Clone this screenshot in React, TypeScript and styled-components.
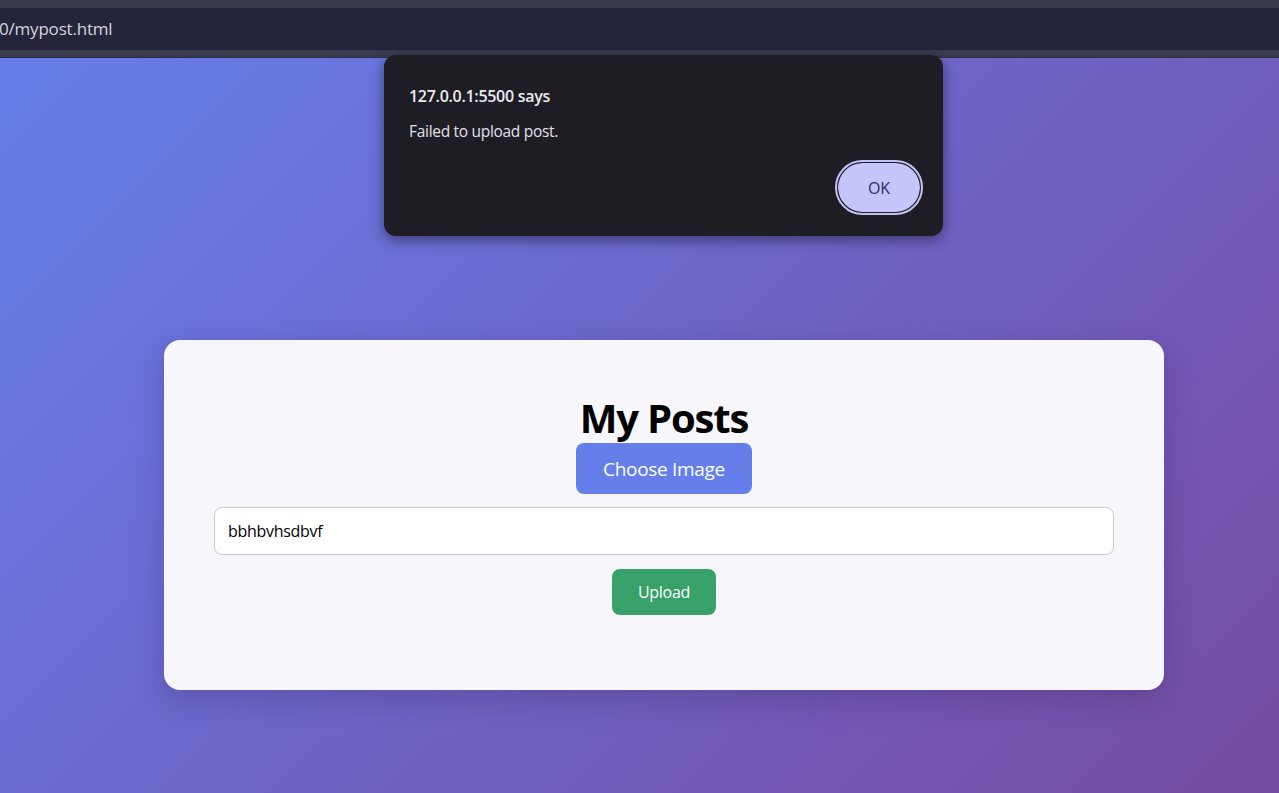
import React, { useState } from 'react';
import styled, { createGlobalStyle } from 'styled-components';

const GlobalStyle = createGlobalStyle`
  html, body {
    margin: 0;
    padding: 0;
    height: 100%;
    overflow: hidden;
  }
  body {
    font-family: "Open Sans", "Liberation Sans", sans-serif;
    background: #25263a;
  }
  * { box-sizing: border-box; }
`;

const Window = styled.div`
  position: relative;
  width: 1279px;
  height: 793px;
  display: flex;
  flex-direction: column;
  overflow: hidden;
`;

// browser chrome, cut off on the left
const TabStrip = styled.div`
  height: 8px;
  background: #393a4e;
`;

const AddressBar = styled.div`
  height: 42px;
  background: #24253a;
  display: flex;
  align-items: center;
  padding-bottom: 1px;
  color: #d4d4dc;
  font-size: 17px;
  letter-spacing: -0.2px;
  margin-left: -1px;
`;

const ToolbarEdge = styled.div`
  height: 8px;
  background: #3a3b4f;
  border-bottom: 1px solid #2c2d3e;
`;

const Page = styled.main`
  flex: 1;
  background: linear-gradient(135deg, #667eea 0%, #764ba2 100%);
  display: flex;
  justify-content: center;
  align-items: flex-start;
  padding: 282px 0 0 49px;
`;

const Card = styled.section`
  width: 1000px;
  height: 350px;
  background: #f7f7fb;
  border-radius: 16px;
  box-shadow: 0 10px 30px rgba(30, 20, 70, 0.22);
  display: flex;
  flex-direction: column;
  align-items: center;
  padding: 54px 50px 0;
`;

const Title = styled.h1`
  margin: 0 0 1px;
  font-size: 40px;
  line-height: 48px;
  font-weight: 700;
  color: #000;
  letter-spacing: -1.2px;
`;

const Button = styled.button<{ $tone: 'primary' | 'success' }>`
  border: none;
  border-radius: 8px;
  color: #fff;
  font-family: inherit;
  cursor: pointer;
  background: ${({ $tone }) => ($tone === 'primary' ? '#667eea' : '#38a169')};
  width: ${({ $tone }) => ($tone === 'primary' ? '176px' : '104px')};
  height: ${({ $tone }) => ($tone === 'primary' ? '51px' : '46px')};
  font-size: ${({ $tone }) => ($tone === 'primary' ? '19px' : '16px')};
  letter-spacing: -0.3px;
  padding: 0;
`;

const CaptionInput = styled.input`
  width: 900px;
  height: 48px;
  margin: 13px 0 14px;
  border: 1px solid #cccccc;
  border-radius: 8px;
  background: #fff;
  padding: 0 13px;
  font-family: inherit;
  font-size: 16px;
  letter-spacing: -0.3px;
  color: #000;
  outline: none;
`;

// native alert dialog
const Alert = styled.div`
  position: absolute;
  left: 384px;
  top: 55px;
  width: 559px;
  height: 181px;
  background: #1e1d24;
  border-radius: 12px;
  box-shadow: 0 4px 14px rgba(0, 0, 0, 0.45);
  padding: 29px 20px 20px 25px;
  display: flex;
  flex-direction: column;
`;

const AlertTitle = styled.div`
  color: #ecebf2;
  font-size: 16px;
  font-weight: 600;
  line-height: 24px;
  letter-spacing: -0.3px;
`;

const AlertMessage = styled.div`
  color: #e2e1ea;
  font-size: 15.5px;
  line-height: 20px;
  margin-top: 13px;
  letter-spacing: -0.3px;
`;

const AlertActions = styled.div`
  margin-top: auto;
  display: flex;
  justify-content: flex-end;
`;

const OkButton = styled.button`
  width: 88px;
  height: 55px;
  border-radius: 28px;
  border: 3px solid #1e1d24;
  background: #c6c5fb;
  background-clip: padding-box;
  color: #2a2e62;
  font-family: inherit;
  font-size: 16px;
  font-weight: 500;
  position: relative;
  margin-bottom: 1px;
  &::after {
    content: '';
    position: absolute;
    inset: -3px;
    border-radius: 28px;
    border: 2px solid #c3c2f8;
  }
`;

export default function App() {
  const [caption, setCaption] = useState('bbhbvhsdbvf');
  return (
    <>
      <GlobalStyle />
      <Window>
        <TabStrip />
        <AddressBar>0/mypost.html</AddressBar>
        <ToolbarEdge />
        <Page>
          <Card>
            <Title>My Posts</Title>
            <Button $tone="primary">Choose Image</Button>
            <CaptionInput value={caption} onChange={(e) => setCaption(e.target.value)} />
            <Button $tone="success">Upload</Button>
          </Card>
        </Page>
        <Alert>
          <AlertTitle>127.0.0.1:5500 says</AlertTitle>
          <AlertMessage>Failed to upload post.</AlertMessage>
          <AlertActions>
            <OkButton>OK</OkButton>
          </AlertActions>
        </Alert>
      </Window>
    </>
  );
}
